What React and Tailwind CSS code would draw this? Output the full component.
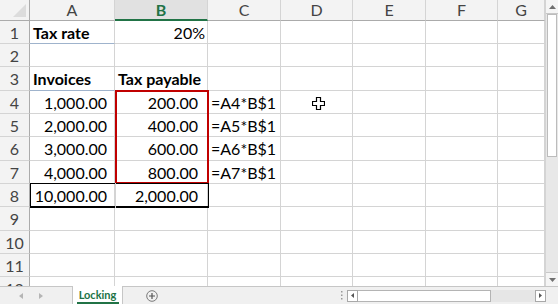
import React from 'react';

const cols = ['A', 'B', 'C', 'D', 'E', 'F', 'G'];
const rowHeights = ['h-[23px]', 'h-[23px]', 'h-[24px]', 'h-[23px]', 'h-[23px]', 'h-[24px]', 'h-[23px]', 'h-[23px]', 'h-[24px]', 'h-[23px]', 'h-[23px]', 'h-[24px]'];

const heading = 'font-bold text-[#1f3864]';

// cell content per row: [A, B, C]
const data = {
    1: [{ t: 'Tax rate', c: heading + ' text-left pl-[3px]', line: true }, { t: '20%', c: 'text-right pr-[2px]' }, null],
    3: [{ t: 'Invoices', c: heading + ' text-left pl-[3px]', line: true }, { t: 'Tax payable', c: heading + ' text-left pl-[3px]', line: true }, null],
    4: [{ t: '1,000.00', c: 'text-right pr-[7px]' }, { t: '200.00', c: 'text-right pr-[9px]' }, { t: '=A4*B$1', c: 'text-left pl-[3px]' }],
    5: [{ t: '2,000.00', c: 'text-right pr-[7px]' }, { t: '400.00', c: 'text-right pr-[9px]' }, { t: '=A5*B$1', c: 'text-left pl-[3px]' }],
    6: [{ t: '3,000.00', c: 'text-right pr-[7px]' }, { t: '600.00', c: 'text-right pr-[9px]' }, { t: '=A6*B$1', c: 'text-left pl-[3px]' }],
    7: [{ t: '4,000.00', c: 'text-right pr-[7px]' }, { t: '800.00', c: 'text-right pr-[9px]' }, { t: '=A7*B$1', c: 'text-left pl-[3px]' }],
    8: [{ t: '10,000.00', c: 'text-right pr-[7px]' }, { t: '2,000.00', c: 'text-right pr-[9px]' }, null],
};

const Cell = ({ cell, h }) => (
    <div className={`${h} border-r border-b border-[#d4d4d4] leading-[23px] whitespace-nowrap overflow-visible text-[16px] text-black ${cell ? cell.c : ''} ${cell && cell.line ? 'border-b-[#9fb3cc]' : ''}`}>
        {cell ? cell.t : ''}
    </div>
);

const App = () => {
    return (
        <div className="w-[558px] h-[304px] overflow-hidden bg-white flex flex-col font-['Lato',sans-serif] select-none">
            <div className="flex h-[286px]">
                <div className="relative w-[545px] h-[286px] overflow-hidden">
                    <div className="grid grid-cols-[30px_85px_93px_73px_72px_73px_72px_47px]">
                        {/* header row */}
                        <div className="h-[21px] bg-[#f3f3f3] border-r border-b border-[#ababab] relative">
                            <svg className="absolute right-[3px] bottom-[3px]" width="13" height="13" viewBox="0 0 13 13">
                                <polygon points="13,0 13,13 0,13" fill="#dcdcdc" />
                            </svg>
                        </div>
                        {cols.map((c) => (
                            <div
                                key={c}
                                className={`h-[21px] leading-[20px] text-center text-[16px] border-r border-[#d4d4d4] ${c === 'B' ? 'bg-[#e1e1e1] text-[#217346] font-bold border-b-2 border-b-[#217346]' : 'bg-[#f3f3f3] text-[#444] border-b border-b-[#ababab]'}`}
                            >
                                {c}
                            </div>
                        ))}
                        {rowHeights.map((h, i) => {
                            const r = i + 1;
                            const row = data[r] || [null, null, null];
                            return (
                                <React.Fragment key={r}>
                                    <div className={`${h} leading-[23px] text-center text-[16px] text-[#444] bg-[#f3f3f3] border-r border-r-[#ababab] border-b border-b-[#d4d4d4]`}>
                                        {r}
                                    </div>
                                    <Cell cell={row[0]} h={h} />
                                    <Cell cell={row[1]} h={h} />
                                    <Cell cell={row[2]} h={h} />
                                    <Cell cell={null} h={h} />
                                    <Cell cell={null} h={h} />
                                    <Cell cell={null} h={h} />
                                    <Cell cell={null} h={h} />
                                </React.Fragment>
                            );
                        })}
                    </div>

                    {/* red box around B4:B7 */}
                    <div className="absolute left-[115px] top-[90px] w-[94px] h-[94px] border-2 border-[#c00000] pointer-events-none" />
                    {/* total row borders A8:B8 */}
                    <div className="absolute left-[30px] top-[183px] w-[179px] h-[25px] border border-black border-b-2 pointer-events-none" />
                    <div className="absolute left-[115px] top-[183px] w-px h-[25px] bg-[#d4d4d4] pointer-events-none" />

                    {/* cursor */}
                    <svg className="absolute left-[312px] top-[97px]" width="13" height="13" viewBox="0 0 13 13">
                        <path d="M4.5 0.5h4v4h4v4h-4v4h-4v-4h-4v-4h4z" fill="white" stroke="black" strokeWidth="1.2" />
                    </svg>
                </div>

                {/* vertical scrollbar */}
                <div className="w-[13px] h-[286px] bg-[#e8e8e8] border-l border-[#d4d4d4] flex flex-col">
                    <div className="h-[14px] bg-[#f5f5f5] border-b border-[#c8c8c8] flex items-center justify-center">
                        <svg width="7" height="4" viewBox="0 0 7 4"><polygon points="3.5,0 7,4 0,4" fill="#707070" /></svg>
                    </div>
                    <div className="h-[143px] bg-white border border-[#bcbcbc] mx-[1px]" />
                    <div className="flex-1" />
                    <div className="h-[14px] bg-[#f5f5f5] border-t border-[#c8c8c8] flex items-center justify-center">
                        <svg width="7" height="4" viewBox="0 0 7 4"><polygon points="0,0 7,0 3.5,4" fill="#707070" /></svg>
                    </div>
                </div>
            </div>

            {/* sheet tabs + horizontal scrollbar */}
            <div className="h-[18px] bg-[#f0f0f0] border-t border-[#c6c6c6] flex items-stretch">
                <div className="w-[72px] flex items-center">
                    <svg className="ml-[19px]" width="4" height="6" viewBox="0 0 4 6"><polygon points="4,0 4,6 0,3" fill="#b5b5b5" /></svg>
                    <svg className="ml-[16px]" width="4" height="6" viewBox="0 0 4 6"><polygon points="0,0 4,3 0,6" fill="#b5b5b5" /></svg>
                </div>
                <div className="w-[51px] -mt-px bg-white border-x border-[#c6c6c6] flex flex-col items-center">
                    <span className="text-[11px] leading-[15px] font-bold text-[#217346] mt-[1px]">Locking</span>
                    <div className="w-[42px] h-[2px] bg-[#217346] mt-auto" />
                </div>
                <div className="w-[58px] flex items-center justify-center">
                    <svg width="12" height="12" viewBox="0 0 12 12">
                        <circle cx="6" cy="6" r="5.3" fill="none" stroke="#7a7a7a" strokeWidth="1" />
                        <path d="M6 3v6M3 6h6" stroke="#555" strokeWidth="1.2" />
                    </svg>
                </div>
                <div className="flex-1" />
                <div className="w-[10px] flex items-center justify-center">
                    <svg width="2" height="9" viewBox="0 0 2 9"><rect x="0" y="0" width="1.5" height="1.5" fill="#999" /><rect x="0" y="3.5" width="1.5" height="1.5" fill="#999" /><rect x="0" y="7" width="1.5" height="1.5" fill="#999" /></svg>
                </div>
                <div className="w-[199px] mr-[12px] flex items-center">
                    <div className="w-[11px] h-[12px] bg-white border border-[#a8a8a8] flex items-center justify-center">
                        <svg width="3" height="5" viewBox="0 0 3 5"><polygon points="3,0 3,5 0,2.5" fill="#555" /></svg>
                    </div>
                    <div className="w-[133px] h-[12px] bg-white border border-[#b4b4b4] border-l-0" />
                    <div className="flex-1 h-[12px] bg-[#e6e6e6]" />
                    <div className="w-[11px] h-[12px] bg-white border border-[#a8a8a8] flex items-center justify-center">
                        <svg width="3" height="5" viewBox="0 0 3 5"><polygon points="0,0 3,2.5 0,5" fill="#555" /></svg>
                    </div>
                </div>
            </div>
        </div>
    );
};

export default App;
